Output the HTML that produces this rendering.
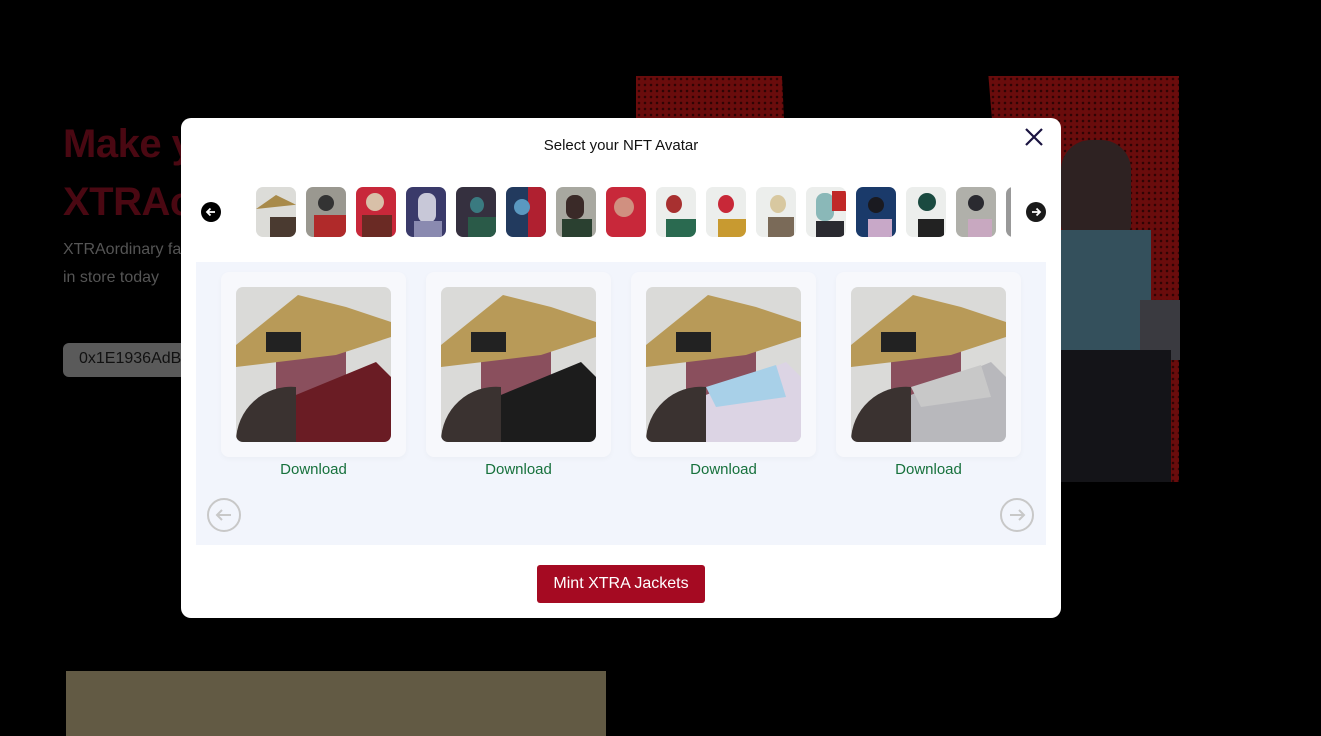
<!DOCTYPE html>
<html><head><meta charset="utf-8"><style>
*{margin:0;padding:0;box-sizing:border-box}
body{width:1321px;height:736px;background:#000;position:relative;overflow:hidden;font-family:"Liberation Sans",sans-serif}
.abs{position:absolute}
.h1{left:63px;color:#4a0812;font-weight:bold;font-size:40px;letter-spacing:-0.5px}
.sub{left:63px;color:#555;font-size:16px}
.modal{left:181px;top:118px;width:880px;height:500px;background:#fff;border-radius:10px}
.thumb{position:absolute;top:69px;width:40px;height:50px;border-radius:7px;overflow:hidden}
.gal{left:15px;top:144px;width:850px;height:283px;background:#f2f5fc}
.card{position:absolute;top:10px;width:185px;height:185px;background:#f7f8fc;border-radius:8px;box-shadow:0 2px 6px rgba(0,0,0,.03)}
.card svg{position:absolute;left:15px;top:15px;border-radius:7px}
.dl{position:absolute;top:199px;width:185px;text-align:center;color:#17713c;font-size:15px}
.circ{position:absolute;width:34px;height:34px;border:2px solid #c8c8c8;border-radius:50%}
</style></head><body>
<div class="abs" style="left:636px;top:76px;width:543px;height:406px;background:#6a0c0c;background-image:radial-gradient(#300404 1.1px,transparent 1.5px);background-size:6px 6px"></div>
<div class="abs" style="left:782px;top:76px;width:240px;height:406px;background:#000;clip-path:polygon(0 0,86% 0,100% 100%,8% 100%)"></div>
<div class="abs" style="left:1061px;top:140px;width:70px;height:95px;background:#2e2222;border-radius:30px 30px 10px 10px"></div>
<div class="abs" style="left:1061px;top:230px;width:90px;height:130px;background:#34505c"></div>
<div class="abs" style="left:1140px;top:300px;width:40px;height:60px;background:#3a3a40"></div>
<div class="abs" style="left:1061px;top:350px;width:110px;height:132px;background:#141418"></div>
<div class="abs" style="left:66px;top:671px;width:540px;height:65px;background:#625a44"></div>
<div class="abs h1" style="top:122px">Make y</div>
<div class="abs h1" style="top:180px">XTRAo</div>
<div class="abs sub" style="top:241px">XTRAordinary fa</div>
<div class="abs sub" style="top:269px">in store today</div>
<div class="abs" style="left:63px;top:343px;width:140px;height:34px;background:#5a5a5a;border-radius:6px;color:#111;font-size:16px;padding:7px 16px">0x1E1936AdBc</div>

<div class="abs modal">
<div style="position:absolute;top:19px;width:100%;text-align:center;font-size:15px;color:#111">Select your NFT Avatar</div>
<svg style="position:absolute;left:843px;top:9px" width="20" height="20" viewBox="0 0 20 20"><path d="M2 2L18 18M18 2L2 18" stroke="#1a1340" stroke-width="2.2"/></svg>
<div style="position:absolute;left:20px;top:84px;width:20px;height:20px;border-radius:50%;background:#000"><svg width="20" height="20" viewBox="0 0 20 20"><path d="M14 10H6M9.5 6.5L6 10l3.5 3.5" stroke="#fff" stroke-width="1.8" fill="none"/></svg></div>
<div style="position:absolute;left:845px;top:84px;width:20px;height:20px;border-radius:50%;background:#1a1a1a"><svg width="20" height="20" viewBox="0 0 20 20"><path d="M6 10h8M10.5 6.5L14 10l-3.5 3.5" stroke="#fff" stroke-width="1.8" fill="none"/></svg></div>
<div style="position:absolute;left:75px;top:0;width:755px;height:200px;overflow:hidden">
<div class="thumb" style="left:0;background:#dcdcd8"><div style="position:absolute;left:0;top:8px;width:40px;height:14px;background:#a88a4a;clip-path:polygon(0 100%,50% 0,100% 70%)"></div><div style="position:absolute;left:14px;top:30px;width:26px;height:20px;background:#4a3a30"></div></div>
<div class="thumb" style="left:50px;background:#9a9890"><div style="position:absolute;left:12px;top:8px;width:16px;height:16px;border-radius:50%;background:#333"></div><div style="position:absolute;left:8px;top:28px;width:32px;height:22px;background:#b02a2a"></div></div>
<div class="thumb" style="left:100px;background:#c8283a"><div style="position:absolute;left:10px;top:6px;width:18px;height:18px;border-radius:50%;background:#d8c0a8"></div><div style="position:absolute;left:6px;top:28px;width:30px;height:22px;background:#6a2a24"></div></div>
<div class="thumb" style="left:150px;background:#3a3a6a"><div style="position:absolute;left:12px;top:6px;width:18px;height:30px;border-radius:8px;background:#c8c8d8"></div><div style="position:absolute;left:8px;top:34px;width:28px;height:16px;background:#8a8ab0"></div></div>
<div class="thumb" style="left:200px;background:#35303f"><div style="position:absolute;left:14px;top:10px;width:14px;height:16px;border-radius:50%;background:#3a7a80"></div><div style="position:absolute;left:12px;top:30px;width:28px;height:20px;background:#2a5a48"></div></div>
<div class="thumb" style="left:250px;background:#223a5e"><div style="position:absolute;left:22px;top:0;width:18px;height:50px;background:#b02030"></div><div style="position:absolute;left:8px;top:12px;width:16px;height:16px;border-radius:50%;background:#5a98c0"></div></div>
<div class="thumb" style="left:300px;background:#a8a8a0"><div style="position:absolute;left:10px;top:8px;width:18px;height:24px;border-radius:8px;background:#3a2a28"></div><div style="position:absolute;left:6px;top:32px;width:30px;height:18px;background:#2a4030"></div></div>
<div class="thumb" style="left:350px;background:#c8283a"><div style="position:absolute;left:8px;top:10px;width:20px;height:20px;border-radius:50%;background:#d09080"></div></div>
<div class="thumb" style="left:400px;background:#eceeec"><div style="position:absolute;left:10px;top:8px;width:16px;height:18px;border-radius:50%;background:#a83030"></div><div style="position:absolute;left:10px;top:32px;width:30px;height:18px;background:#2a6a50"></div></div>
<div class="thumb" style="left:450px;background:#eceeec"><div style="position:absolute;left:12px;top:8px;width:16px;height:18px;border-radius:50%;background:#c82838"></div><div style="position:absolute;left:12px;top:32px;width:28px;height:18px;background:#c89a30"></div></div>
<div class="thumb" style="left:500px;background:#eceeec"><div style="position:absolute;left:14px;top:8px;width:16px;height:18px;border-radius:50%;background:#d8c8a0"></div><div style="position:absolute;left:12px;top:30px;width:26px;height:20px;background:#7a6a58"></div></div>
<div class="thumb" style="left:550px;background:#eceeec"><div style="position:absolute;left:10px;top:6px;width:18px;height:28px;border-radius:8px;background:#8ab8b8"></div><div style="position:absolute;left:26px;top:4px;width:14px;height:20px;background:#c02828"></div><div style="position:absolute;left:10px;top:34px;width:28px;height:16px;background:#2a2a30"></div></div>
<div class="thumb" style="left:600px;background:#1a3a6a"><div style="position:absolute;left:12px;top:10px;width:16px;height:16px;border-radius:50%;background:#1a1a20"></div><div style="position:absolute;left:12px;top:32px;width:24px;height:18px;background:#c8a8c8"></div></div>
<div class="thumb" style="left:650px;background:#eceeec"><div style="position:absolute;left:12px;top:6px;width:18px;height:18px;border-radius:50%;background:#1a4a40"></div><div style="position:absolute;left:12px;top:32px;width:26px;height:18px;background:#222"></div></div>
<div class="thumb" style="left:700px;background:#b0b0aa"><div style="position:absolute;left:12px;top:8px;width:16px;height:16px;border-radius:50%;background:#2a2a30"></div><div style="position:absolute;left:12px;top:32px;width:24px;height:18px;background:#c8a8c0"></div></div>
<div class="thumb" style="left:750px;background:#999"></div>
</div>

<div class="abs gal">
<div class="card" style="left:25px"><svg width="155" height="155" viewBox="0 0 155 155"><rect width="155" height="155" fill="#dadad8"/><rect x="40" y="60" width="70" height="55" fill="#8a4f5d"/><polygon points="55,110 140,75 155,90 155,155 50,155" fill="#6a1c24"/><path d="M0 155A55 55 0 0 1 60 100V155Z" fill="#3a3230"/><polygon points="0,58 62,8 110,20 155,35 155,50 100,68 0,80" fill="#b89a58"/><rect x="30" y="45" width="35" height="20" fill="#222"/></svg></div>
<div class="dl" style="left:25px">Download</div>
<div class="card" style="left:230px"><svg width="155" height="155" viewBox="0 0 155 155"><rect width="155" height="155" fill="#dadad8"/><rect x="40" y="60" width="70" height="55" fill="#8a4f5d"/><polygon points="55,110 140,75 155,90 155,155 50,155" fill="#1c1c1c"/><path d="M0 155A55 55 0 0 1 60 100V155Z" fill="#3a3230"/><polygon points="0,58 62,8 110,20 155,35 155,50 100,68 0,80" fill="#b89a58"/><rect x="30" y="45" width="35" height="20" fill="#222"/></svg></div>
<div class="dl" style="left:230px">Download</div>
<div class="card" style="left:435px"><svg width="155" height="155" viewBox="0 0 155 155"><rect width="155" height="155" fill="#dadad8"/><rect x="40" y="60" width="70" height="55" fill="#8a4f5d"/><polygon points="55,110 140,75 155,90 155,155 50,155" fill="#dcd4e4"/><polygon points="60,100 130,78 140,110 70,120" fill="#a8d0e8"/><path d="M0 155A55 55 0 0 1 60 100V155Z" fill="#3a3230"/><polygon points="0,58 62,8 110,20 155,35 155,50 100,68 0,80" fill="#b89a58"/><rect x="30" y="45" width="35" height="20" fill="#222"/></svg></div>
<div class="dl" style="left:435px">Download</div>
<div class="card" style="left:640px"><svg width="155" height="155" viewBox="0 0 155 155"><rect width="155" height="155" fill="#dadad8"/><rect x="40" y="60" width="70" height="55" fill="#8a4f5d"/><polygon points="55,110 140,75 155,90 155,155 50,155" fill="#b8b8bc"/><polygon points="60,100 130,78 140,110 70,120" fill="#c8c8c8"/><path d="M0 155A55 55 0 0 1 60 100V155Z" fill="#3a3230"/><polygon points="0,58 62,8 110,20 155,35 155,50 100,68 0,80" fill="#b89a58"/><rect x="30" y="45" width="35" height="20" fill="#222"/></svg></div>
<div class="dl" style="left:640px">Download</div>
<div class="circ" style="left:11px;top:236px"><svg width="30" height="30" viewBox="0 0 30 30"><path d="M22 15H8M13 10l-5 5 5 5" stroke="#c8c8c8" stroke-width="2" fill="none"/></svg></div>
<div class="circ" style="left:804px;top:236px"><svg width="30" height="30" viewBox="0 0 30 30"><path d="M8 15h14M17 10l5 5-5 5" stroke="#c8c8c8" stroke-width="2" fill="none"/></svg></div>
</div>
<div style="position:absolute;left:356px;top:447px;width:168px;height:38px;background:#a50a22;border-radius:3px;color:#fff;font-size:16px;text-align:center;line-height:38px">Mint XTRA Jackets</div>
</div>
</body></html>
